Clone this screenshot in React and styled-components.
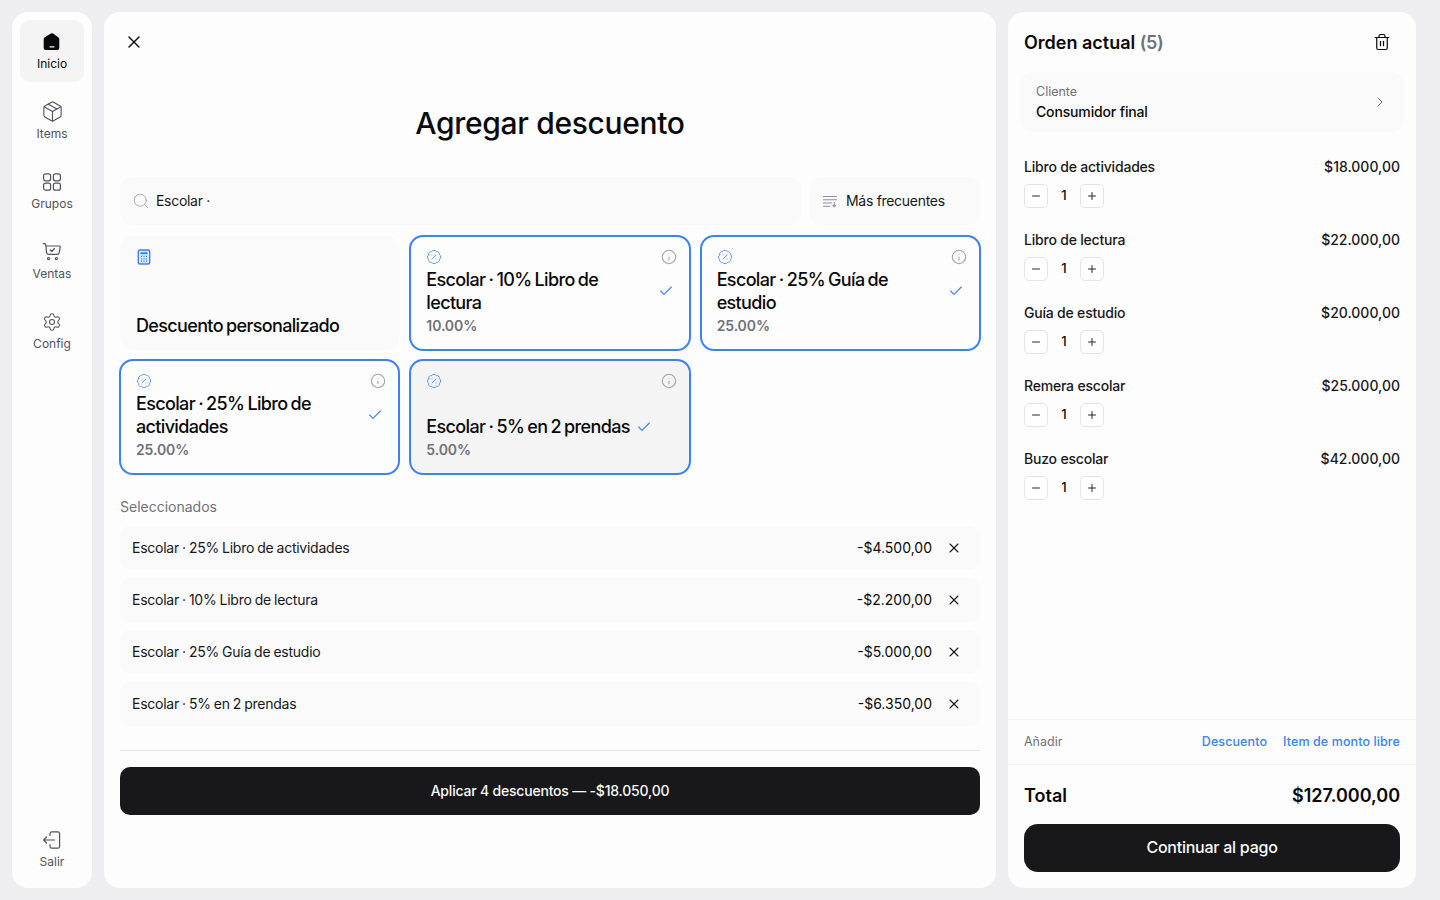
import React from "react";
import styled, { createGlobalStyle } from "styled-components";
import { Package, Settings, X, Info, Check, Minus, Plus, Search, ChevronRight, Trash2, BadgePercent } from "lucide-react";

const Global = createGlobalStyle`
  * { box-sizing: border-box; }
  html, body { margin: 0; padding: 0; height: 100%; }
  body {
    background: #eeeef0;
    color: #09090b;
    font-family: Inter, "Noto Sans", sans-serif;
    -webkit-font-smoothing: antialiased;
  }
`;

const Page = styled.div`
  display: flex;
  gap: 12px;
  height: 900px;
  padding: 12px 24px 12px 12px;
`;

const Sidebar = styled.nav`
  display: flex;
  flex-direction: column;
  gap: 8px;
  width: 80px;
  flex-shrink: 0;
  padding: 8px;
  background: #fdfdfd;
  border-radius: 16px;
`;

const NavItem = styled.div`
  display: flex;
  flex-direction: column;
  align-items: center;
  justify-content: center;
  gap: 4px;
  height: 62px;
  padding-top: 1px;
  margin-top: ${p => (p.$bottom ? "auto" : "0")};
  border-radius: 10px;
  background: ${p => (p.$active ? "#f4f4f5" : "transparent")};
  color: ${p => (p.$active ? "#09090b" : "#52525b")};
  font-size: 12px;
  line-height: 16px;
  svg { display: block; }
`;

const BoxIcon = styled(Package)`
  margin: -1.5px;
`;

const Main = styled.main`
  flex: 1;
  display: flex;
  flex-direction: column;
  padding: 18px 16px;
  background: #fdfdfd;
  border-radius: 16px;
`;

const CloseBtn = styled.div`
  display: flex;
  align-items: center;
  justify-content: center;
  width: 24px;
  height: 24px;
  margin-left: 2px;
`;

const Title = styled.h1`
  margin: 49px 0 34px;
  font-size: 30px;
  line-height: 40px;
  font-weight: 500;
  letter-spacing: -0.33px;
  text-align: center;
`;

const Toolbar = styled.div`
  display: flex;
  gap: 8px;
  margin-bottom: 11px;
`;

const SearchBox = styled.div`
  flex: 1;
  display: flex;
  align-items: center;
  gap: 6px;
  height: 48px;
  padding: 0 12px 1px;
  background: #fafafa;
  border-radius: 12px;
  font-size: 14px;
  letter-spacing: -0.3px;
  color: #18181b;
`;

const SortBox = styled(SearchBox)`
  flex: none;
  width: 170px;
  gap: 8px;
`;

const CardGrid = styled.div`
  display: grid;
  grid-template-columns: repeat(3, 1fr);
  grid-auto-rows: 114px;
  gap: 10px 11px;
`;

const Card = styled.div`
  display: flex;
  flex-direction: column;
  padding: 12px 16px 14px;
  border-radius: 13px;
  background: ${p => p.$bg || "#fafafa"};
  outline: ${p => (p.$selected ? "2px solid #3b82f6" : "none")};
  outline-offset: -1px;
`;

const CardTop = styled.div`
  display: flex;
  justify-content: space-between;
  align-items: center;
  height: 18px;
  color: #a1a1aa;
`;

const CardBody = styled.div`
  margin-top: auto;
  margin-bottom: ${p => (p.$drop ? "-1px" : "0")};
`;

const TitleRow = styled.div`
  display: flex;
  align-items: center;
  gap: 6px;
`;

const CardTitle = styled.div`
  font-size: 18px;
  line-height: 23px;
  font-weight: 500;
  letter-spacing: -0.65px;
  word-spacing: -1px;
`;

const CheckMark = styled(Check)`
  flex-shrink: 0;
  color: #3b82f6;
`;

const InfoIcon = styled(Info)`
  margin-right: -3px;
`;

const Percent = styled.div`
  margin-top: 2px;
  font-size: 14px;
  line-height: 20px;
  font-weight: 600;
  letter-spacing: -0.1px;
  color: #71717a;
`;

const SectionLabel = styled.div`
  margin: 23px 0 9px;
  font-size: 14px;
  line-height: 20px;
  color: #71717a;
`;

const SelectedList = styled.div`
  display: flex;
  flex-direction: column;
  gap: 8px;
`;

const SelectedRow = styled.div`
  display: flex;
  align-items: center;
  height: 44px;
  padding: 0 18px 1px 12px;
  background: #fafafa;
  border-radius: 10px;
  font-size: 14px;
  color: #18181b;
`;

const RowName = styled.span`
  letter-spacing: -0.25px;
  word-spacing: -0.6px;
`;

const Amount = styled.span`
  margin-left: auto;
  margin-right: 14px;
  color: #09090b;
`;

const Divider = styled.div`
  height: 1px;
  margin: 24px 0 16px;
  background: #e4e4e7;
`;

const ApplyBtn = styled.div`
  display: flex;
  align-items: center;
  justify-content: center;
  height: 48px;
  padding-bottom: 1px;
  border-radius: 10px;
  background: #18181b;
  color: #fafafa;
  font-size: 14px;
  font-weight: 500;
  letter-spacing: -0.2px;
`;

const Order = styled.aside`
  display: flex;
  flex-direction: column;
  width: 408px;
  flex-shrink: 0;
  background: #fdfdfd;
  border-radius: 16px;
`;

const OrderHead = styled.div`
  display: flex;
  align-items: center;
  justify-content: space-between;
  height: 60px;
  padding: 0 25px 0 16px;
  font-size: 18px;
  font-weight: 600;
`;

const Count = styled.span`
  letter-spacing: -0.4px;
  color: #71717a;
`;

const ClientCard = styled.div`
  display: flex;
  align-items: center;
  justify-content: space-between;
  height: 60px;
  margin: 0 12px 25px;
  padding: 0 16px;
  background: #fafafa;
  border-radius: 12px;
  color: #71717a;
`;

const ClientLabel = styled.div`
  font-size: 12.5px;
  line-height: 18px;
  color: #71717a;
`;

const ClientName = styled.div`
  margin-top: 1px;
  font-size: 14px;
  line-height: 20px;
  font-weight: 500;
  letter-spacing: -0.15px;
  color: #09090b;
`;

const Lines = styled.div`
  flex: 1;
  display: flex;
  flex-direction: column;
  gap: 22px;
  padding: 0 16px;
`;

const LineTop = styled.div`
  display: flex;
  justify-content: space-between;
  font-size: 14px;
  line-height: 20px;
  font-weight: 500;
  color: #18181b;
`;

const LineName = styled.span`
  letter-spacing: -0.2px;
`;

const Stepper = styled.div`
  display: flex;
  align-items: center;
  margin-top: 7px;
  font-size: 13px;
  font-weight: 500;
`;

const StepBtn = styled.div`
  display: flex;
  align-items: center;
  justify-content: center;
  width: 24px;
  height: 24px;
  border: 1px solid #e4e4e7;
  border-radius: 5px;
  background: #fff;
  color: #27272a;
`;

const Qty = styled.span`
  width: 32px;
  padding-bottom: 2px;
  text-align: center;
`;

const AddRow = styled.div`
  display: flex;
  align-items: center;
  gap: 16px;
  height: 46px;
  padding: 0 16px 1px;
  border-top: 1px solid #f4f4f5;
  border-bottom: 1px solid #f4f4f5;
  font-size: 12.5px;
  color: #71717a;
`;

const AddLink = styled.span`
  color: #3b82f6;
  font-weight: 500;
  letter-spacing: 0.1px;
  &:first-of-type { margin-left: auto; }
`;

const Summary = styled.div`
  padding: 16px;
`;

const TotalRow = styled.div`
  display: flex;
  justify-content: space-between;
  margin-bottom: 14px;
  padding-top: 1px;
  font-size: 18px;
  line-height: 28px;
  font-weight: 600;
`;

const PayBtn = styled(ApplyBtn)`
  padding-bottom: 2px;
  border-radius: 14px;
  font-size: 16px;
  letter-spacing: -0.25px;
`;

const HomeIcon = () => (
  <svg width="20" height="20" viewBox="0 0 20 20">
    <path fill="#09090b" fillRule="evenodd" d="M8.8 1.6a2 2 0 0 1 2.4 0l5.3 3.9a2 2 0 0 1 .8 1.6v8.4a2.6 2.6 0 0 1-2.6 2.6H4.3a2.6 2.6 0 0 1-2.6-2.6V7.1a2 2 0 0 1 .8-1.6zM8 14.2a.6.6 0 0 0 0 1.2h4a.6.6 0 0 0 0-1.2z" />
  </svg>
);

const GroupsIcon = () => (
  <svg width="20" height="20" viewBox="0 0 20 20" fill="none" stroke="currentColor" strokeWidth="1.2">
    <rect x="1.6" y="1.8" width="7" height="7" rx="2" />
    <rect x="11.4" y="1.8" width="7" height="7" rx="2" />
    <rect x="1.6" y="11.2" width="7" height="7" rx="2" />
    <rect x="11.4" y="11.2" width="7" height="7" rx="2" />
  </svg>
);

const CartIcon = () => (
  <svg width="20" height="20" viewBox="0 0 20 20" fill="none" stroke="currentColor" strokeWidth="1.2" strokeLinecap="round" strokeLinejoin="round">
    <path d="M1.2 1.6h1.3c.6 0 1 .4 1.1.9l.3 1.5h13.4c.6 0 1 .5.9 1.1l-1 5.6c-.2 1-1 1.7-2 1.7H6.6c-1 0-1.8-.7-2-1.7L3.9 4" />
    <path d="M8.2 8l1.6 1.5 2.6-3" />
    <circle cx="6.6" cy="16.6" r="1.1" />
    <circle cx="14.4" cy="16.6" r="1.1" />
  </svg>
);

const ExitIcon = () => (
  <svg width="20" height="20" viewBox="0 0 20 20" fill="none" stroke="currentColor" strokeWidth="1.2" strokeLinecap="round" strokeLinejoin="round">
    <path d="M8 5.5V3.6c0-1 .8-1.8 1.8-1.8h6c1 0 1.8.8 1.8 1.8v12.8c0 1-.8 1.8-1.8 1.8h-6c-1 0-1.8-.8-1.8-1.8v-1.9" />
    <path d="M12.6 10H1.6M4.6 7l-3 3 3 3" />
  </svg>
);

const SortIcon = () => (
  <svg width="16" height="16" viewBox="0 0 16 16" fill="none" stroke="#8e8e96" strokeWidth="1.1" strokeLinecap="round">
    <path d="M1.5 3.5h13M1.5 6.8h13M1.5 10h8M1.5 13.2h6M12.2 9.5v4.2M10.8 12.4l1.4 1.4 1.4-1.4" />
  </svg>
);

const CalcIcon = () => (
  <svg width="16" height="16" viewBox="0 0 16 16" fill="none">
    <rect x="2.3" y="1" width="11.4" height="14" rx="1.8" fill="#dbeafe" stroke="#3b82f6" strokeWidth="1.4" />
    <rect x="4.5" y="3.2" width="7" height="2" fill="#3b82f6" />
    <path d="M5 7.4h1.2M7.4 7.4h1.2M9.8 7.4H11M5 9.8h1.2M7.4 9.8h1.2M9.8 9.8H11M5 12.2h1.2M7.4 12.2h1.2M9.8 12.2H11" stroke="#3b82f6" strokeWidth="1.2" />
  </svg>
);

const navItems = [
  { label: "Inicio", icon: <HomeIcon />, active: true },
  { label: "Items", icon: <BoxIcon size={23} strokeWidth={1.15} /> },
  { label: "Grupos", icon: <GroupsIcon /> },
  { label: "Ventas", icon: <CartIcon /> },
  { label: "Config", icon: <Settings size={20} strokeWidth={1.3} /> },
];

const discounts = [
  { title: "Escolar · 10% Libro de lectura", pct: "10.00%" },
  { title: "Escolar · 25% Guía de estudio", pct: "25.00%" },
  { title: "Escolar · 25% Libro de actividades", pct: "25.00%" },
  { title: "Escolar · 5% en 2 prendas", pct: "5.00%", bg: "#f4f4f5" },
];

const selected = [
  ["Escolar · 25% Libro de actividades", "-$4.500,00"],
  ["Escolar · 10% Libro de lectura", "-$2.200,00"],
  ["Escolar · 25% Guía de estudio", "-$5.000,00"],
  ["Escolar · 5% en 2 prendas", "-$6.350,00"],
];

const lines = [
  ["Libro de actividades", "$18.000,00"],
  ["Libro de lectura", "$22.000,00"],
  ["Guía de estudio", "$20.000,00"],
  ["Remera escolar", "$25.000,00"],
  ["Buzo escolar", "$42.000,00"],
];

export default function App() {
  return (
    <>
      <Global />
      <Page>
        <Sidebar>
          {navItems.map(n => (
            <NavItem key={n.label} $active={n.active}>
              {n.icon}
              {n.label}
            </NavItem>
          ))}
          <NavItem $bottom>
            <ExitIcon />
            Salir
          </NavItem>
        </Sidebar>

        <Main>
          <CloseBtn>
            <X size={20} strokeWidth={1.6} />
          </CloseBtn>
          <Title>Agregar descuento</Title>
          <Toolbar>
            <SearchBox>
              <Search size={18} color="#a1a1aa" strokeWidth={1.2} />
              Escolar ·
            </SearchBox>
            <SortBox>
              <SortIcon />
              Más frecuentes
            </SortBox>
          </Toolbar>
          <CardGrid>
            <Card>
              <CardTop>
                <CalcIcon />
              </CardTop>
              <CardBody $drop>
                <CardTitle>Descuento personalizado</CardTitle>
              </CardBody>
            </Card>
            {discounts.map(d => (
              <Card key={d.title} $selected $bg={d.bg || "#fdfdfd"}>
                <CardTop>
                  <BadgePercent size={16} color="#3b82f6" strokeWidth={1.2} />
                  <InfoIcon size={16} strokeWidth={1.6} />
                </CardTop>
                <CardBody>
                  <TitleRow>
                    <CardTitle>{d.title}</CardTitle>
                    <CheckMark size={16} strokeWidth={1.7} />
                  </TitleRow>
                  <Percent>{d.pct}</Percent>
                </CardBody>
              </Card>
            ))}
          </CardGrid>
          <SectionLabel>Seleccionados</SectionLabel>
          <SelectedList>
            {selected.map(([name, amount]) => (
              <SelectedRow key={name}>
                <RowName>{name}</RowName>
                <Amount>{amount}</Amount>
                <X size={16} strokeWidth={1.6} />
              </SelectedRow>
            ))}
          </SelectedList>
          <Divider />
          <ApplyBtn>Aplicar 4 descuentos — -$18.050,00</ApplyBtn>
        </Main>

        <Order>
          <OrderHead>
            <span>
              Orden actual <Count>(5)</Count>
            </span>
            <Trash2 size={18} strokeWidth={1.6} />
          </OrderHead>
          <ClientCard>
            <div>
              <ClientLabel>Cliente</ClientLabel>
              <ClientName>Consumidor final</ClientName>
            </div>
            <ChevronRight size={16} strokeWidth={1.5} />
          </ClientCard>
          <Lines>
            {lines.map(([name, price]) => (
              <div key={name}>
                <LineTop>
                  <LineName>{name}</LineName>
                  <span>{price}</span>
                </LineTop>
                <Stepper>
                  <StepBtn>
                    <Minus size={12} strokeWidth={2} />
                  </StepBtn>
                  <Qty>1</Qty>
                  <StepBtn>
                    <Plus size={12} strokeWidth={2} />
                  </StepBtn>
                </Stepper>
              </div>
            ))}
          </Lines>
          <AddRow>
            Añadir
            <AddLink>Descuento</AddLink>
            <AddLink>Item de monto libre</AddLink>
          </AddRow>
          <Summary>
            <TotalRow>
              <span>Total</span>
              <span>$127.000,00</span>
            </TotalRow>
            <PayBtn>Continuar al pago</PayBtn>
          </Summary>
        </Order>
      </Page>
    </>
  );
}
